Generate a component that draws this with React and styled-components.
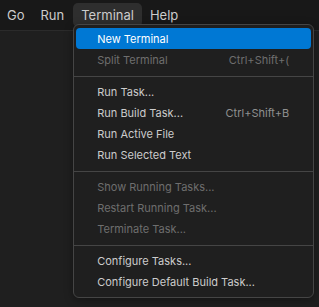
import React from 'react'
import styled, { createGlobalStyle } from 'styled-components'

const GlobalStyle = createGlobalStyle`
  html, body {
    margin: 0;
    padding: 0;
    background: #1f1f1f;
    font-family: Inter, "Noto Sans", sans-serif;
  }
`

const topMenus = ['Go', 'Run', 'Terminal', 'Help']

const groups = [
  [
    { label: 'New Terminal', active: true },
    { label: 'Split Terminal', shortcut: 'Ctrl+Shift+(', disabled: true },
  ],
  [
    { label: 'Run Task...' },
    { label: 'Run Build Task...', shortcut: 'Ctrl+Shift+B' },
    { label: 'Run Active File' },
    { label: 'Run Selected Text' },
  ],
  [
    { label: 'Show Running Tasks...', disabled: true },
    { label: 'Restart Running Task...', disabled: true },
    { label: 'Terminate Task...', disabled: true },
  ],
  [
    { label: 'Configure Tasks...' },
    { label: 'Configure Default Build Task...' },
  ],
]

function App() {
  return (
    <Page>
      <GlobalStyle />
      <MenuBar>
        {topMenus.map(name => (
          <TopItem key={name} $open={name === 'Terminal'}>
            {name}
            {name === 'Terminal' && (
              <Dropdown>
                {groups.map((group, gi) => (
                  <React.Fragment key={gi}>
                    {gi > 0 && <Separator />}
                    {group.map(item => (
                      <Item key={item.label} $active={item.active} $disabled={item.disabled}>
                        <span>{item.label}</span>
                        {item.shortcut && (
                          <Shortcut $disabled={item.disabled}>{item.shortcut}</Shortcut>
                        )}
                      </Item>
                    ))}
                  </React.Fragment>
                ))}
              </Dropdown>
            )}
          </TopItem>
        ))}
      </MenuBar>
    </Page>
  )
}

export default App

const Page = styled.div`
  width: 319px;
  height: 307px;
  background: #1f1f1f;
  overflow: hidden;
`

const MenuBar = styled.div`
  height: 31px;
  box-sizing: border-box;
  background: #181818;
  border-bottom: 1px solid #2b2b2b;
  display: flex;
  align-items: flex-start;
  padding-top: 3px;
`

const TopItem = styled.div`
  position: relative;
  height: 24px;
  display: flex;
  align-items: center;
  padding: 0 8px;
  font-size: 13px;
  color: #cccccc;
  border-radius: 5px;
  background: ${props => (props.$open ? '#2e2e2e' : 'transparent')};
  margin-left: ${props => (props.$open ? '1px' : '0')};
  &:first-child {
    padding-left: 7px;
  }
`

const Dropdown = styled.div`
  position: absolute;
  top: 21px;
  left: 0;
  width: 241px;
  box-sizing: border-box;
  background: #1f1f1f;
  border: 1px solid #454545;
  border-radius: 6px;
  padding: 3px 2px 5px 2px;
  box-shadow: 0 2px 8px rgba(0, 0, 0, 0.36);
  z-index: 10;
`

const Item = styled.div`
  height: 21px;
  display: flex;
  align-items: center;
  justify-content: space-between;
  padding: 0 22px 0 21px;
  border-radius: 4px;
  font-size: 11px;
  white-space: nowrap;
  color: ${props => (props.$active ? '#ffffff' : props.$disabled ? '#6e6e6e' : '#cccccc')};
  background: ${props => (props.$active ? '#0078d4' : 'transparent')};
`

const Shortcut = styled.span`
  color: ${props => (props.$disabled ? '#6e6e6e' : '#8f8f8f')};
`

const Separator = styled.div`
  height: 1px;
  background: #454545;
  margin: 6px -2px 4px -2px;
`
